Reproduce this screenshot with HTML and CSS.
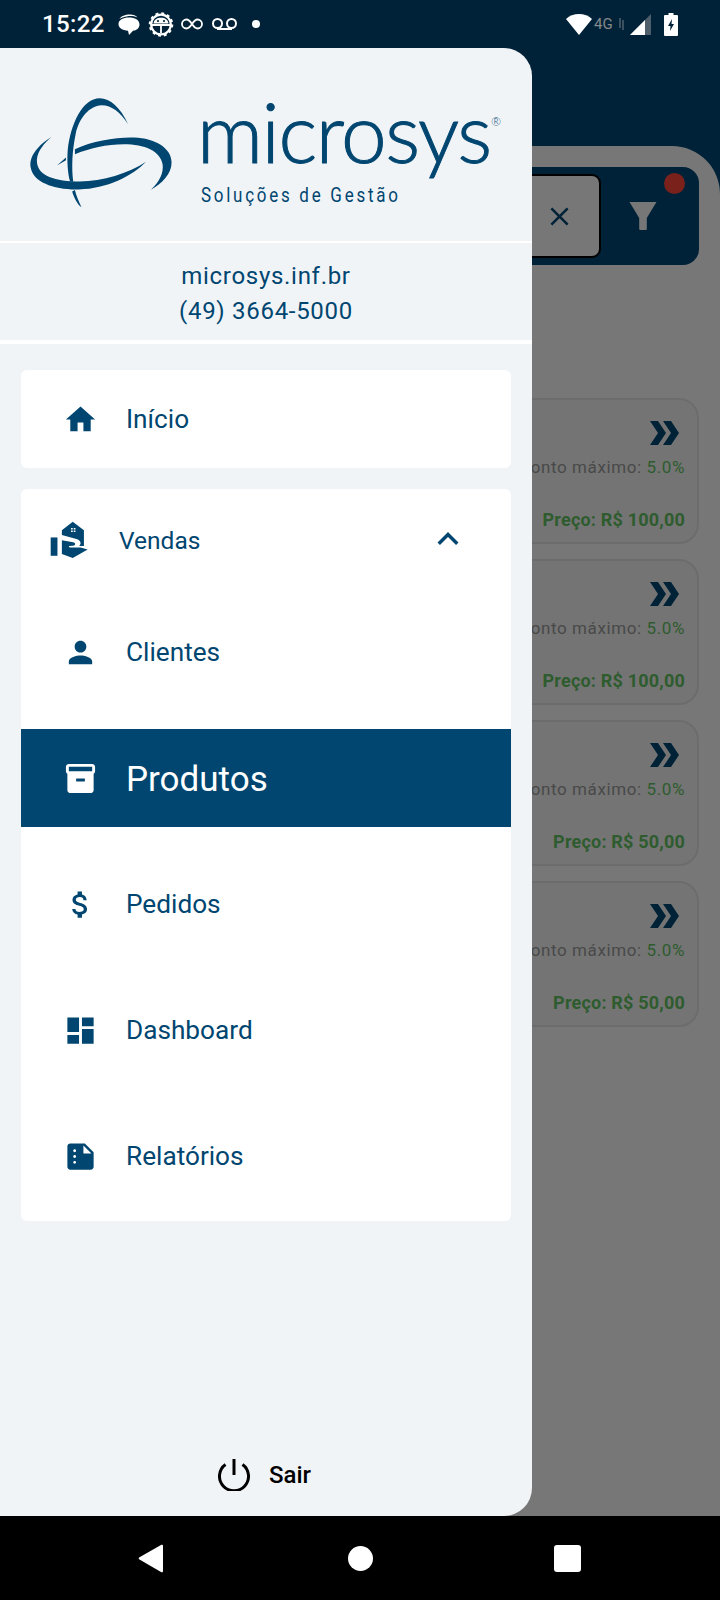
FILE: index.html
```html
<!DOCTYPE html>
<html lang="pt-BR">
<head>
    <meta charset="UTF-8">
    <meta name="viewport" content="width=device-width, initial-scale=1.0">
    <title>Microsys</title>
    <link rel="stylesheet" href="styles.css">
</head>
<body>
    <div class="screen">
        <div class="status-bar">
            <span class="clock">15:22</span>
            <svg class="st-bubble" viewBox="0 0 22 21"><path d="M1.500 5C3 2 7 .5 12 .5c3.500 0 6 1 7.500 3-3.500-1.500-7-1.800-10-1.300C6.500 2.700 3.500 3.500 1.500 5z" fill="#fff"/><path d="M.5 10C.5 6 5 3.500 11 3.500s10.500 2.500 10.500 7c0 3.600-3 6-6.500 6.300L11 21l-1-4.200C4.500 16.300.5 14 .5 10z" fill="#fff"/></svg>
            <svg class="st-gear" viewBox="0 0 26 25">
                <circle cx="13" cy="12.500" r="9.800" fill="none" stroke="#fff" stroke-width="2.200"/>
                <circle cx="13" cy="12.500" r="11.200" fill="none" stroke="#fff" stroke-width="2.200" stroke-dasharray="2.900 2.960"/>
                <path d="M5.500 11.500c.4-3.800 3.500-5.800 7.500-5.800s7.100 2 7.500 5.800z" fill="#fff"/>
                <path d="M4 13h18M13 13v8" stroke="#fff" stroke-width="1.800"/>
                <circle cx="10" cy="9" r="1.100" fill="#002238"/><circle cx="16" cy="9" r="1.100" fill="#002238"/>
            </svg>
            <svg class="st-inf" viewBox="0 0 22 12"><path d="M11 6C9 3 7.500 1.500 5.500 1.500a4.500 4.500 0 0 0 0 9C7.500 10.500 9 9 11 6s3.500-4.500 5.500-4.500a4.500 4.500 0 0 1 0 9C14.500 10.500 13 9 11 6z" fill="none" stroke="#fff" stroke-width="1.800"/></svg>
            <svg class="st-voice" viewBox="0 0 27 12"><circle cx="6.500" cy="5.500" r="4.500" fill="none" stroke="#fff" stroke-width="2"/><circle cx="20.500" cy="5.500" r="4.500" fill="none" stroke="#fff" stroke-width="2"/><path d="M6 11h15" stroke="#fff" stroke-width="2"/></svg>
            <span class="st-dot"></span>
            <div class="status-right">
                <svg class="st-wifi" viewBox="0 0 26 21"><path d="M13 0C8 0 3.500 1.800 0 5l13 16L26 5c-3.500-3.200-8-5-13-5z" fill="#fff"/></svg>
                <span class="st-net">4G</span>
                <svg class="st-arrows" viewBox="0 0 7 12"><path d="M2 0v10M5 2v10" stroke="#5b6a76" stroke-width="1.300"/></svg>
                <svg class="st-signal" viewBox="0 0 21 21"><path d="M21 0v21H0z" fill="#4e5f6b"/><path d="M15 6v15H0z" fill="#fff"/></svg>
                <svg class="st-battery" viewBox="0 0 14 23"><path d="M4.500 0h5v2H13a1 1 0 0 1 1 1v19a1 1 0 0 1-1 1H1a1 1 0 0 1-1-1V3a1 1 0 0 1 1-1h3.500z" fill="#fff"/><path d="M8 6l-4 7h2.500L6 18l4-7H7.500z" fill="#002238"/></svg>
            </div>
        </div>

        <div class="page">
            <div class="page-head"></div>
            <div class="panel">
                <div class="search-bar">
                    <div class="search-input">
                        <svg class="search-clear" viewBox="0 0 24 24"><path d="M19 6.410 17.590 5 12 10.590 6.410 5 5 6.410 10.590 12 5 17.590 6.410 19 12 13.410 17.590 19 19 17.590 13.410 12z"/></svg>
                    </div>
                    <div class="filter">
                        <svg class="filter-icon" viewBox="0 0 28 28"><path d="M.5 0h27L17.800 16v11a1 1 0 0 1-1 1h-5.600a1 1 0 0 1-1-1V16z"/></svg>
                        <span class="filter-badge"></span>
                    </div>
                </div>
                <div class="products">
                    <div class="product">
                        <svg class="go" viewBox="0 0 29 24"><path d="M0 0h8l8 12-8 12H0l8-12zM13 0h8l8 12-8 12h-8l8-12z"/></svg>
                        <div class="discount">Desconto máximo: <span>5.0%</span></div>
                        <div class="price">Preço: R$ 100,00</div>
                    </div>
                    <div class="product">
                        <svg class="go" viewBox="0 0 29 24"><path d="M0 0h8l8 12-8 12H0l8-12zM13 0h8l8 12-8 12h-8l8-12z"/></svg>
                        <div class="discount">Desconto máximo: <span>5.0%</span></div>
                        <div class="price">Preço: R$ 100,00</div>
                    </div>
                    <div class="product">
                        <svg class="go" viewBox="0 0 29 24"><path d="M0 0h8l8 12-8 12H0l8-12zM13 0h8l8 12-8 12h-8l8-12z"/></svg>
                        <div class="discount">Desconto máximo: <span>5.0%</span></div>
                        <div class="price">Preço: R$ 50,00</div>
                    </div>
                    <div class="product">
                        <svg class="go" viewBox="0 0 29 24"><path d="M0 0h8l8 12-8 12H0l8-12zM13 0h8l8 12-8 12h-8l8-12z"/></svg>
                        <div class="discount">Desconto máximo: <span>5.0%</span></div>
                        <div class="price">Preço: R$ 50,00</div>
                    </div>
                </div>
            </div>
        </div>

        <div class="nav-bar">
            <svg class="nav-back" viewBox="0 0 25 29"><path d="M23 1 1.500 13.200a1.500 1.500 0 0 0 0 2.400L23 28c1 .6 2 0 2-1V2c0-1-1-1.600-2-1z"/></svg>
            <span class="nav-home"></span>
            <span class="nav-recent"></span>
        </div>

        <div class="scrim"></div>

        <aside class="drawer">
            <div class="brand">
                <svg class="brand-mark" viewBox="85 105 420 340" preserveAspectRatio="none">
                    <path d="M150 228C100 260 85 295 90 320c6 45 70 68 140 66 80-1 155-41 194-83-54 37-134 62-204 59-70-2-115-22-112-67 2-25 22-50 42-67z"/>
                    <path d="M218 265c52-25 122-37 172-35 60 2 108 32 108 75 0 35-28 63-60 82 27-27 37-52 34-77-7-40-52-60-112-60-50 0-100 12-142 30z"/>
                    <path d="M372 190C350 140 320 112 290 112c-50 0-85 78-93 158-2 30 0 70 7 92h9c-5-42-3-92 7-142 10-50 40-85 75-87 30 0 55 22 77 57z"/>
                    <path d="M210 392c5 18 15 38 27 48-9-20-15-35-19-52zM166 314l26-24v8z"/>
                </svg>
                <div class="brand-name">microsys<span class="brand-reg">®</span></div>
                <div class="brand-tag">Soluções de Gestão</div>
            </div>
            <div class="contact">
                <div>microsys.inf.br</div>
                <div>(49) 3664-5000</div>
            </div>

            <div class="menu">
                <div class="menu-card">
                    <div class="menu-item">
                        <svg class="menu-icon" viewBox="0 0 24 24"><path d="M10 20v-6h4v6h5v-8h3L12 3 2 12h3v8z"/></svg>
                        <span>Início</span>
                    </div>
                </div>
                <div class="menu-card menu-group">
                    <div class="group-head">
                        <svg class="group-icon" viewBox="30 33 112 117" preserveAspectRatio="none">
                            <path d="M32 85h20v58H32z"/>
                            <path d="M65 62 97 35l33 27v50h-14c8-8 4-19-8-22L65 77z"/>
                            <path d="M65 94l33 6c8 2 9 9 0 11l-13 1 3 5h32l21 6-44 27-32-13z"/>
                            <path d="M92 55h5v5h-5zM100 55h5v5h-5zM92 63h5v5h-5zM100 63h5v5h-5z" fill="#fff"/>
                        </svg>
                        <span class="group-title">Vendas</span>
                        <svg class="group-arrow" viewBox="0 0 24 24"><path d="M7.410 15.410 12 10.830l4.590 4.580L18 14l-6-6-6 6z"/></svg>
                    </div>
                    <div class="menu-list">
                        <div class="menu-item">
                            <svg class="menu-icon" viewBox="0 0 24 24"><path d="M12 12c2.210 0 4-1.790 4-4s-1.790-4-4-4-4 1.790-4 4 1.790 4 4 4zm0 2c-2.670 0-8 1.340-8 4v2h16v-2c0-2.660-5.330-4-8-4z"/></svg>
                            <span>Clientes</span>
                        </div>
                        <div class="menu-item active">
                            <svg class="menu-icon" viewBox="0 0 24 24"><path d="M20 2H4c-1 0-2 .9-2 2v3.010c0 .72.43 1.340 1 1.690V20c0 1.100 1.100 2 2 2h14c.9 0 2-.9 2-2V8.700c.57-.35 1-.97 1-1.690V4c0-1.100-1-2-2-2zm-5 12H9v-2h6v2zm5-7H4V4l16-.02V7z"/></svg>
                            <span>Produtos</span>
                        </div>
                        <div class="menu-item">
                            <svg class="menu-icon" viewBox="0 0 24 24"><path d="M11.800 10.900c-2.270-.59-3-1.200-3-2.150 0-1.090 1.010-1.850 2.700-1.850 1.780 0 2.440.85 2.500 2.100h2.210c-.07-1.720-1.120-3.300-3.210-3.810V3h-3v2.160c-1.940.42-3.500 1.680-3.500 3.610 0 2.310 1.910 3.460 4.700 4.130 2.500.6 3 1.480 3 2.410 0 .69-.49 1.790-2.700 1.790-2.060 0-2.870-.92-2.980-2.100h-2.200c.12 2.190 1.760 3.420 3.680 3.830V21h3v-2.150c1.950-.37 3.500-1.500 3.500-3.550 0-2.840-2.430-3.810-4.700-4.400z"/></svg>
                            <span>Pedidos</span>
                        </div>
                        <div class="menu-item">
                            <svg class="menu-icon" viewBox="0 0 24 24"><path d="M3 13h8V3H3v10zm0 8h8v-6H3v6zm10 0h8V11h-8v10zm0-18v6h8V3h-8z"/></svg>
                            <span>Dashboard</span>
                        </div>
                        <div class="menu-item">
                            <svg class="menu-icon" viewBox="0 0 24 24"><path d="M15 3H5c-1.100 0-1.990.9-1.990 2L3 19c0 1.100.89 2 1.990 2H19c1.100 0 2-.9 2-2V9l-6-6zM8 17c-.55 0-1-.45-1-1s.45-1 1-1 1 .45 1 1-.45 1-1 1zm0-4c-.55 0-1-.45-1-1s.45-1 1-1 1 .45 1 1-.45 1-1 1zm0-4c-.55 0-1-.45-1-1s.45-1 1-1 1 .45 1 1-.45 1-1 1zm6 1V4.500l5.500 5.500H14z"/></svg>
                            <span>Relatórios</span>
                        </div>
                    </div>
                </div>
            </div>

            <div class="logout">
                <svg class="logout-icon" viewBox="0 0 32 32"><path d="M7.500 5.500a14.500 14.500 0 1 0 17 0M16 0v16"/></svg>
                <span>Sair</span>
            </div>
        </aside>
    </div>
</body>
</html>
```

FILE: styles.css
```css
* {
    box-sizing: border-box;
}

body {
    margin: 0;
    font-family: Roboto, "Liberation Sans", sans-serif;
    background-color: #000;
}

.screen {
    width: 720px;
    height: 1600px;
    position: relative;
    overflow: hidden;
    display: flex;
    flex-direction: column;
}

/* status bar */
.status-bar {
    height: 48px;
    flex: none;
    background-color: #002238;
    display: flex;
    align-items: center;
    padding-left: 42px;
    color: #fff;
}

.clock {
    font-size: 24px;
    font-weight: 500;
    letter-spacing: 0.4px;
    width: 76px;
}

.st-bubble {
    width: 22px;
    height: 21px;
    margin-right: 8px;
}

.st-gear {
    width: 26px;
    height: 25px;
    margin-right: 7px;
}

.st-inf {
    width: 22px;
    height: 12px;
    margin-right: 8px;
}

.st-voice {
    width: 27px;
    height: 12px;
    margin-right: 14px;
}

.st-dot {
    width: 8px;
    height: 8px;
    border-radius: 50%;
    background-color: #fff;
}

.status-right {
    margin-left: auto;
    padding-right: 42px;
    display: flex;
    align-items: center;
}

.st-wifi {
    width: 26px;
    height: 21px;
    margin-right: 2px;
}

.st-net {
    font-size: 15px;
    color: #85898c;
    width: 24px;
}

.st-arrows {
    width: 7px;
    height: 12px;
    margin-right: 5px;
}

.st-signal {
    width: 21px;
    height: 21px;
    margin-right: 13px;
}

.st-battery {
    width: 14px;
    height: 23px;
}

/* page behind the drawer */
.page {
    flex: 1;
    display: flex;
    flex-direction: column;
    background-color: #004470;
}

.page-head {
    height: 98px;
    flex: none;
}

.panel {
    flex: 1;
    background-color: #eee;
    border-radius: 48px 48px 0 0;
    padding: 21px 21px 0;
}

.search-bar {
    height: 98px;
    background-color: #004470;
    border-radius: 16px;
    display: flex;
    padding: 7px 0 7px 7px;
    position: relative;
}

.search-input {
    flex: 1;
    background-color: #eee;
    border: 2px solid #000;
    border-radius: 9px;
    display: flex;
    align-items: center;
    justify-content: flex-end;
    padding-right: 24px;
}

.search-clear {
    width: 31px;
    height: 31px;
    fill: #00446f;
}

.filter {
    width: 98px;
    flex: none;
    display: flex;
    align-items: center;
    justify-content: center;
}

.filter-icon {
    width: 28px;
    height: 28px;
    fill: #eee;
    margin-left: -15px;
}

.filter-badge {
    position: absolute;
    top: 6px;
    right: 14px;
    width: 21px;
    height: 21px;
    border-radius: 50%;
    background-color: #f44336;
}

.products {
    margin-top: 133px;
    display: flex;
    flex-direction: column;
    gap: 15px;
}

.product {
    height: 146px;
    background-color: #e9e9e9;
    border: 2px solid #d9d9d9;
    border-radius: 20px;
    padding: 21px 12px 0 0;
    display: flex;
    flex-direction: column;
    align-items: flex-end;
}

.go {
    width: 29px;
    height: 24px;
    margin-right: 6px;
    fill: #00446f;
}

.discount {
    margin-top: 12px;
    font-size: 17px;
    letter-spacing: 0.6px;
    color: #929292;
}

.discount span {
    color: #5cb85c;
}

.price {
    margin-top: 32px;
    font-size: 18px;
    font-weight: 700;
    letter-spacing: 0.2px;
    color: #5cb85c;
}

/* android buttons */
.nav-bar {
    height: 84px;
    flex: none;
    background-color: #000;
    display: flex;
    align-items: center;
    position: relative;
}

.nav-back {
    width: 25px;
    height: 29px;
    fill: #fff;
    margin-left: 138px;
}

.nav-home {
    width: 25px;
    height: 25px;
    border-radius: 50%;
    background-color: #fff;
    margin-left: 185px;
}

.nav-recent {
    width: 27px;
    height: 27px;
    border-radius: 3px;
    background-color: #fff;
    margin-left: 181px;
}

.scrim {
    position: absolute;
    top: 48px;
    left: 0;
    width: 720px;
    height: 1468px;
    background-color: rgba(0, 0, 0, 0.5);
}

/* drawer */
.drawer {
    position: absolute;
    top: 48px;
    left: 0;
    width: 532px;
    height: 1468px;
    background-color: #f1f4f7;
    border-radius: 0 28px 28px 0;
    display: flex;
    flex-direction: column;
    color: #004670;
}

.brand {
    height: 195px;
    flex: none;
    border-bottom: 2px solid #fff;
    position: relative;
    padding: 53px 0 0 197px;
}

.brand-mark {
    position: absolute;
    left: 29px;
    top: 48px;
    width: 145px;
    height: 113px;
    fill: #004670;
}

.brand-name {
    font-family: Lato, sans-serif;
    font-weight: 300;
    font-size: 82px;
    line-height: 60px;
    letter-spacing: -1.4px;
    -webkit-text-stroke: 1px #004670;
    white-space: nowrap;
    position: relative;
}

.brand-reg {
    position: absolute;
    left: 294px;
    top: 15px;
    font-size: 12px;
    line-height: 12px;
    letter-spacing: 0;
    -webkit-text-stroke: 0;
}

.brand-tag {
    margin: 23px 0 0 4px;
    font-size: 20px;
    line-height: 22px;
    letter-spacing: 3.2px;
    white-space: nowrap;
    transform: scaleX(0.85);
    transform-origin: left;
}

.contact {
    height: 101px;
    flex: none;
    border-bottom: 4px solid #fff;
    padding-top: 16px;
    text-align: center;
    font-size: 24px;
    line-height: 35px;
    letter-spacing: 0.7px;
}

.menu {
    padding: 26px 21px 0;
    display: flex;
    flex-direction: column;
    gap: 21px;
}

.menu-card {
    background-color: #fff;
    border-radius: 6px;
    overflow: hidden;
}

.menu-item {
    height: 98px;
    display: flex;
    align-items: center;
    gap: 28px;
    padding-left: 42px;
    font-size: 26.2px;
}

.menu-item.active {
    background-color: #004670;
    color: #fff;
    font-size: 35px;
}

.menu-item.active span {
    padding-top: 2px;
}

.menu-icon {
    width: 35px;
    height: 35px;
    flex: none;
    fill: currentColor;
}

.group-head {
    height: 100px;
    display: flex;
    align-items: center;
    padding: 0 42px 0 29px;
    font-size: 24.5px;
}

.group-icon {
    width: 38px;
    height: 37px;
    fill: #004670;
    margin-right: 31px;
}

.group-title {
    flex: 1;
    padding-top: 3px;
}

.group-arrow {
    width: 42px;
    height: 42px;
    fill: #004670;
}

.menu-list {
    display: flex;
    flex-direction: column;
    gap: 28px;
    padding: 14px 0 16px;
}

.logout {
    margin-top: auto;
    margin-bottom: 25px;
    display: flex;
    align-items: center;
    justify-content: center;
    gap: 19px;
    font-size: 24px;
    font-weight: 500;
    color: #000;
    padding-right: 3px;
}

.logout-icon {
    width: 32px;
    height: 32px;
    fill: none;
    stroke: #000;
    stroke-width: 3;
}
```
